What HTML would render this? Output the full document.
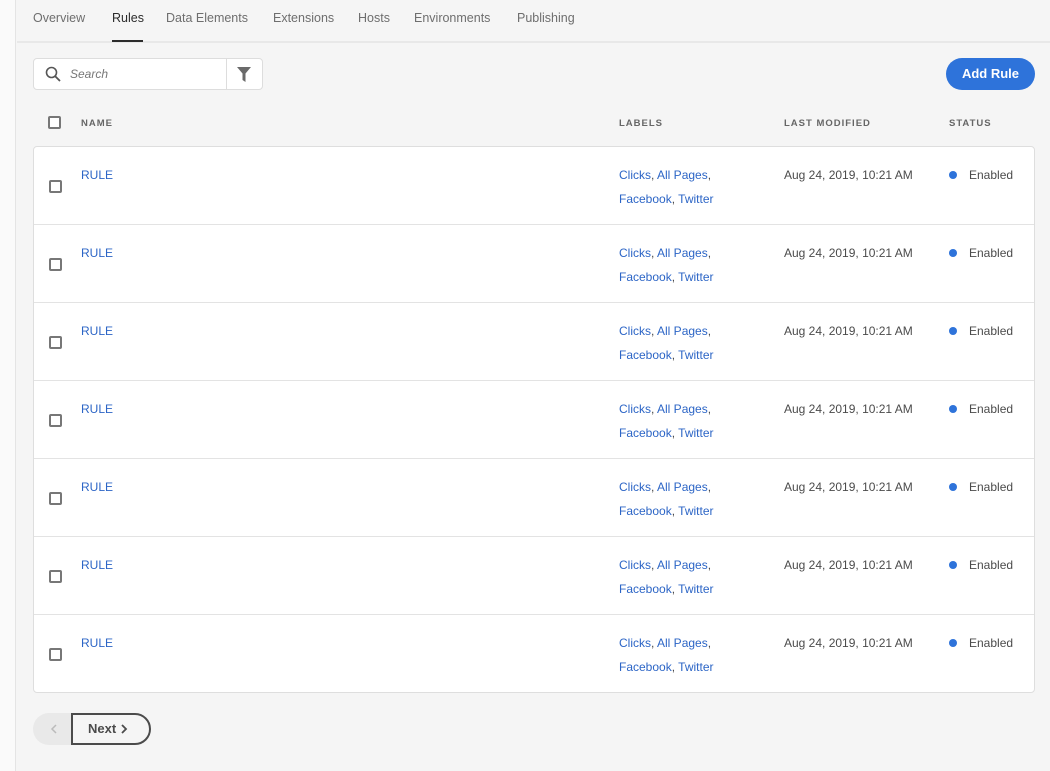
<!DOCTYPE html><html><head><style>
*{box-sizing:border-box;margin:0;padding:0}
body{width:1050px;height:771px;background:#f5f5f5;font-family:"Liberation Sans",sans-serif;position:relative;overflow:hidden;color:#4b4b4b}
.side{position:absolute;left:0;top:0;width:16px;height:771px;background:#fafafa;border-right:1px solid #e4e4e4}
.tabs{position:absolute;left:17px;top:0;right:0;height:43px;border-bottom:2px solid #e8e8e8}
.tab{position:absolute;top:11px;font-size:12.5px;color:#6e6e6e}
.tab.a{color:#2c2c2c}
.ul{position:absolute;left:112px;top:40px;width:31px;height:2px;background:#2c2c2c}
.search{position:absolute;left:33px;top:58px;width:230px;height:32px;background:#fff;border:1px solid #ddd;border-radius:4px}
.search .div{position:absolute;left:192px;top:0;width:1px;height:30px;background:#ddd}
.search span{position:absolute;left:36px;top:8px;font-size:12px;font-style:italic;color:#777}
.btn{position:absolute;left:946px;top:58px;width:89px;height:32px;border-radius:16px;background:#2e73da;color:#fff;font-weight:bold;font-size:13px;text-align:center;line-height:32px}
.cb{position:absolute;width:13px;height:13px;border:2px solid #777;border-radius:2px;background:#fff}
.hd{position:absolute;top:118px;font-size:9.5px;font-weight:bold;letter-spacing:1px;color:#666}
.table{position:absolute;left:33px;top:146px;width:1002px;height:547px;background:#fff;border:1px solid #dedede;border-radius:4px}
.row{position:absolute;left:0;width:1000px;height:78px;border-bottom:1px solid #e3e3e3}
.t{position:absolute;font-size:12px;line-height:24px}
.b{color:#2c65c6}
.dot{position:absolute;left:915px;top:24px;width:8px;height:8px;border-radius:50%;background:#2e73da}
.prev{position:absolute;left:33px;top:713px;width:50px;height:32px;background:#e9e9e9;border-radius:16px 0 0 16px}
.next{position:absolute;left:71px;top:713px;width:80px;height:32px;border:2px solid #4b4b4b;border-radius:0 16px 16px 0;background:#f5f5f5;font-weight:bold;font-size:13px;line-height:28px;padding-left:15px;color:#4b4b4b}
</style></head><body>
<div class="side"></div>
<div class="tabs"></div>
<div class="tab" style="left:33px">Overview</div>
<div class="tab a" style="left:112px">Rules</div>
<div class="tab" style="left:166px">Data Elements</div>
<div class="tab" style="left:273px">Extensions</div>
<div class="tab" style="left:358px">Hosts</div>
<div class="tab" style="left:414px">Environments</div>
<div class="tab" style="left:517px">Publishing</div>
<div class="ul"></div>
<div class="search">
<svg style="position:absolute;left:11px;top:7px" width="17" height="17" viewBox="0 0 17 17"><circle cx="6.5" cy="6.5" r="5" fill="none" stroke="#555" stroke-width="1.6"/><path d="M10.2 10.2L15 15" stroke="#555" stroke-width="1.8"/></svg>
<span>Search</span><div class="div"></div>
<svg style="position:absolute;left:203px;top:8px" width="14" height="15" viewBox="0 0 14 15"><path d="M0 0H14L8.5 6.5V15L5.5 13V6.5Z" fill="#6a6a6a"/></svg>
</div>
<div class="btn">Add Rule</div>
<div class="cb" style="left:48px;top:116px"></div>
<div class="hd" style="left:81px">NAME</div>
<div class="hd" style="left:619px">LABELS</div>
<div class="hd" style="left:784px">LAST MODIFIED</div>
<div class="hd" style="left:949px">STATUS</div>
<div class="table">
<div class="row" style="top:0"><div class="cb" style="left:15px;top:33px"></div><div class="t b" style="left:47px;top:16px">RULE</div><div class="t" style="left:585px;top:16px"><span class="b">Clicks</span>, <span class="b">All Pages</span>,<br><span class="b">Facebook</span>, <span class="b">Twitter</span></div><div class="t" style="left:750px;top:16px">Aug 24, 2019, 10:21 AM</div><div class="dot"></div><div class="t" style="left:935px;top:16px">Enabled</div></div>
<div class="row" style="top:78px"><div class="cb" style="left:15px;top:33px"></div><div class="t b" style="left:47px;top:16px">RULE</div><div class="t" style="left:585px;top:16px"><span class="b">Clicks</span>, <span class="b">All Pages</span>,<br><span class="b">Facebook</span>, <span class="b">Twitter</span></div><div class="t" style="left:750px;top:16px">Aug 24, 2019, 10:21 AM</div><div class="dot"></div><div class="t" style="left:935px;top:16px">Enabled</div></div>
<div class="row" style="top:156px"><div class="cb" style="left:15px;top:33px"></div><div class="t b" style="left:47px;top:16px">RULE</div><div class="t" style="left:585px;top:16px"><span class="b">Clicks</span>, <span class="b">All Pages</span>,<br><span class="b">Facebook</span>, <span class="b">Twitter</span></div><div class="t" style="left:750px;top:16px">Aug 24, 2019, 10:21 AM</div><div class="dot"></div><div class="t" style="left:935px;top:16px">Enabled</div></div>
<div class="row" style="top:234px"><div class="cb" style="left:15px;top:33px"></div><div class="t b" style="left:47px;top:16px">RULE</div><div class="t" style="left:585px;top:16px"><span class="b">Clicks</span>, <span class="b">All Pages</span>,<br><span class="b">Facebook</span>, <span class="b">Twitter</span></div><div class="t" style="left:750px;top:16px">Aug 24, 2019, 10:21 AM</div><div class="dot"></div><div class="t" style="left:935px;top:16px">Enabled</div></div>
<div class="row" style="top:312px"><div class="cb" style="left:15px;top:33px"></div><div class="t b" style="left:47px;top:16px">RULE</div><div class="t" style="left:585px;top:16px"><span class="b">Clicks</span>, <span class="b">All Pages</span>,<br><span class="b">Facebook</span>, <span class="b">Twitter</span></div><div class="t" style="left:750px;top:16px">Aug 24, 2019, 10:21 AM</div><div class="dot"></div><div class="t" style="left:935px;top:16px">Enabled</div></div>
<div class="row" style="top:390px"><div class="cb" style="left:15px;top:33px"></div><div class="t b" style="left:47px;top:16px">RULE</div><div class="t" style="left:585px;top:16px"><span class="b">Clicks</span>, <span class="b">All Pages</span>,<br><span class="b">Facebook</span>, <span class="b">Twitter</span></div><div class="t" style="left:750px;top:16px">Aug 24, 2019, 10:21 AM</div><div class="dot"></div><div class="t" style="left:935px;top:16px">Enabled</div></div>
<div class="row" style="top:468px;border-bottom:none"><div class="cb" style="left:15px;top:33px"></div><div class="t b" style="left:47px;top:16px">RULE</div><div class="t" style="left:585px;top:16px"><span class="b">Clicks</span>, <span class="b">All Pages</span>,<br><span class="b">Facebook</span>, <span class="b">Twitter</span></div><div class="t" style="left:750px;top:16px">Aug 24, 2019, 10:21 AM</div><div class="dot"></div><div class="t" style="left:935px;top:16px">Enabled</div></div>
</div>
<div class="prev"><svg style="position:absolute;left:17px;top:11px" width="8" height="10" viewBox="0 0 8 10"><path d="M6 1L2 5L6 9" fill="none" stroke="#bbb" stroke-width="1.5"/></svg></div>
<div class="next">Next <svg width="8" height="10" viewBox="0 0 8 10" style="vertical-align:-1px"><path d="M2 1L6 5L2 9" fill="none" stroke="#4b4b4b" stroke-width="1.8"/></svg></div>
</body></html>
